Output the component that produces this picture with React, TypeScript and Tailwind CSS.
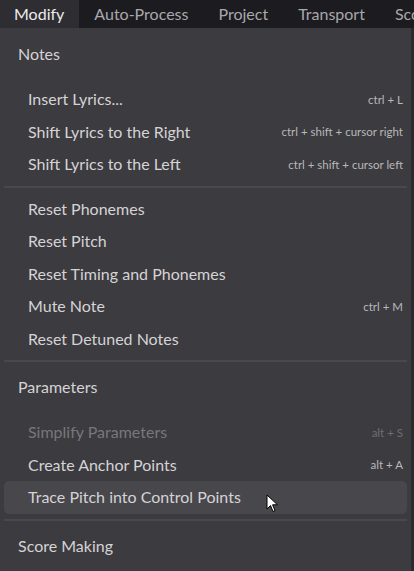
import React from "react";

// ── Types ──────────────────────────────────────────────────────────────────────

type Item = { label: string; shortcut?: string; disabled?: boolean; hover?: boolean };
type Section = { title: string; groups: Item[][] };

const TABS = ["Modify", "Auto-Process", "Project", "Transport", "Score"];

const SECTIONS: Section[] = [
  {
    title: "Notes",
    groups: [
      [
        { label: "Insert Lyrics...", shortcut: "ctrl + L" },
        { label: "Shift Lyrics to the Right", shortcut: "ctrl + shift + cursor right" },
        { label: "Shift Lyrics to the Left", shortcut: "ctrl + shift + cursor left" },
      ],
      [
        { label: "Reset Phonemes" },
        { label: "Reset Pitch" },
        { label: "Reset Timing and Phonemes" },
        { label: "Mute Note", shortcut: "ctrl + M" },
        { label: "Reset Detuned Notes" },
      ],
    ],
  },
  {
    title: "Parameters",
    groups: [
      [
        { label: "Simplify Parameters", shortcut: "alt + S", disabled: true },
        { label: "Create Anchor Points", shortcut: "alt + A" },
        { label: "Trace Pitch into Control Points", hover: true },
      ],
    ],
  },
  { title: "Score Making", groups: [] },
];

const font = "font-['Lato','Noto_Sans',sans-serif]";

// ── Pieces ────────────────────────────────────────────────────────────────────

function Cursor() {
  return (
    <svg className="absolute left-[262px] top-[13px]" width="13" height="19" viewBox="0 0 13 19">
      <path d="M1 1 L1 15 L4.5 11.5 L7 17.5 L9 16.6 L6.6 10.8 L11.5 10.8 Z" fill="#fff" stroke="#000" strokeWidth="1" />
    </svg>
  );
}

function MenuRow({ item }: { item: Item }) {
  return (
    <div
      className={`relative mx-1 flex h-[32.5px] items-center justify-between rounded-[5px] pl-6 pr-1 ${
        item.hover ? "bg-[#48474b]" : ""
      }`}
    >
      <span className={`text-[16px] ${item.disabled ? "text-[#78777b]" : "text-[#d4d3d6]"}`}>{item.label}</span>
      {item.shortcut && (
        <span className={`text-[11.5px] ${item.disabled ? "text-[#6f6e72]" : "text-[#b9b8bb]"}`}>{item.shortcut}</span>
      )}
      {item.hover && <Cursor />}
    </div>
  );
}

function Separator({ section }: { section?: boolean }) {
  return <div className={`mx-1 mt-[5px] h-[2px] bg-[#49484c] ${section ? "mb-[9px]" : "mb-[5px]"}`} />;
}

// ── App ───────────────────────────────────────────────────────────────────────

export default function App() {
  return (
    <div className={`h-[571px] w-[414px] overflow-hidden bg-[#2b2a2e] ${font}`}>
      {/* ── Tab bar ── */}
      <div className="flex h-[28px] items-stretch overflow-hidden whitespace-nowrap bg-[#1c1b1f]">
        {TABS.map((t, i) => (
          <div
            key={t}
            className={`flex shrink-0 items-center text-[16px] ${
              i === 0 ? "bg-[#2e2d31] pl-[14px] pr-[15px] text-[#ebebed]" : "pl-[15px] pr-[15px] text-[#a9a8ac]"
            }`}
          >
            {t}
          </div>
        ))}
      </div>

      {/* ── Menu panel ── */}
      <div className="h-[543px] w-[411px] bg-[#3c3b3f] pt-[10px]">
        {SECTIONS.map((s, si) => (
          <div key={s.title}>
            {si > 0 && <Separator section />}
            <div className="flex h-[32px] items-center pl-[18px] text-[16px] text-[#d4d3d6]">{s.title}</div>
            {s.groups.map((g, gi) => (
              <div key={gi}>
                {gi === 0 ? <div className="h-[13px]" /> : <Separator />}
                {g.map((it) => (
                  <MenuRow key={it.label} item={it} />
                ))}
              </div>
            ))}
          </div>
        ))}
      </div>
    </div>
  );
}
